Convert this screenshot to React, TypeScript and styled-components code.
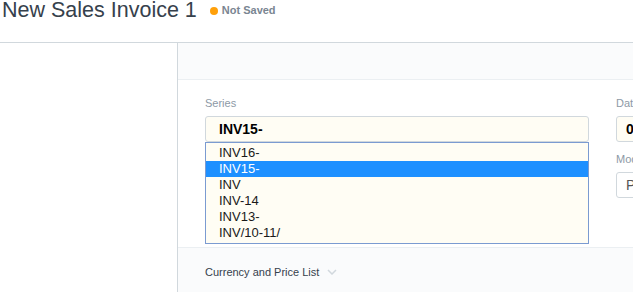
import React from "react";
import styled, { createGlobalStyle } from "styled-components";

const GlobalStyle = createGlobalStyle`
  html, body {
    margin: 0;
    padding: 0;
    background: #fff;
    overflow: hidden;
  }
  body {
    font-family: "Liberation Sans", Arial, sans-serif;
    color: #36414c;
  }
`;

const Page = styled.div`
  width: 633px;
  height: 292px;
  overflow: hidden;
`;

const Header = styled.div`
  display: flex;
  align-items: flex-start;
  height: 42px;
  border-bottom: 1px solid #d1d8dd;
  padding-left: 2px;
`;

const Title = styled.h1`
  margin: 0;
  font-size: 21.5px;
  font-weight: normal;
  line-height: 1;
  color: #36414c;
  white-space: nowrap;
`;

const Indicator = styled.span`
  display: flex;
  align-items: center;
  margin: 4px 0 0 13px;
  font-size: 11px;
  font-weight: bold;
  line-height: 13px;
  color: #7a8591;
  white-space: nowrap;
`;

const Dot = styled.span<{ $color: string }>`
  width: 8px;
  height: 8px;
  border-radius: 50%;
  background: ${(p) => p.$color};
  margin-right: 4px;
  margin-top: 1px;
`;

const Body = styled.div`
  display: flex;
  height: 249px;
`;

const Sidebar = styled.div`
  flex: 0 0 177px;
  background: #fff;
`;

const Main = styled.div`
  flex: 0 0 auto;
  width: 900px;
  border-left: 1px solid #d1d8dd;
  display: flex;
  flex-direction: column;
`;

const Toolbar = styled.div`
  height: 36px;
  background: #fafbfc;
  border-bottom: 1px solid #ebeff2;
`;

const FormSection = styled.div`
  display: grid;
  grid-template-columns: 384px 384px;
  column-gap: 27px;
  padding: 15px 0 40px 27px;
  background: #fff;
`;

const Column = styled.div`
  display: flex;
  flex-direction: column;
`;

const Field = styled.div`
  position: relative;
  margin-bottom: 9px;
`;

const Label = styled.div`
  font-size: 11px;
  line-height: 16px;
  margin-bottom: 5px;
  color: #8d99a6;
  white-space: nowrap;
`;

const Control = styled.div<{ $bg?: string; $bold?: boolean; $pad?: number }>`
  box-sizing: border-box;
  height: 26px;
  display: flex;
  align-items: center;
  padding-left: ${(p) => p.$pad ?? 9}px;
  border: 1px solid #d1d8dd;
  border-radius: 3px;
  background: ${(p) => p.$bg ?? "#fff"};
  font-size: 14px;
  font-weight: ${(p) => (p.$bold ? "bold" : "normal")};
  color: ${(p) => (p.$bold ? "#000" : "#555")};
  white-space: nowrap;
  overflow: hidden;
`;

const Listbox = styled.ul`
  position: absolute;
  top: 100%;
  left: 0;
  right: 0;
  z-index: 2;
  box-sizing: border-box;
  margin: 0;
  padding: 2px 0;
  list-style: none;
  border: 1px solid #7b9bd1;
  background: #fffdf4;
`;

const Option = styled.li<{ $selected?: boolean }>`
  height: 16px;
  padding-left: 13px;
  font-size: 13px;
  line-height: 16px;
  color: ${(p) => (p.$selected ? "#fff" : "#1a1a1a")};
  background: ${(p) => (p.$selected ? "#1e90ff" : "transparent")};
`;

const CollapsedSection = styled.div`
  flex: 1;
  background: #fafbfc;
  border-top: 1px solid #ebeff2;
  padding: 16px 0 0 27px;
`;

const SectionHead = styled.div`
  display: flex;
  align-items: center;
  gap: 8px;
  font-size: 11px;
  line-height: 16px;
  color: #36414c;
`;

const Chevron = () => (
  <svg width="10" height="6" viewBox="0 0 10 6">
    <polyline points="1,1 5,5 9,1" fill="none" stroke="#d1d8dd" strokeWidth="1.5" />
  </svg>
);

const series = ["INV16-", "INV15-", "INV", "INV-14", "INV13-", "INV/10-11/"];

export default function App() {
  return (
    <Page>
      <GlobalStyle />
      <Header>
        <Title>New Sales Invoice 1</Title>
        <Indicator>
          <Dot $color="#ffa00a" />
          Not Saved
        </Indicator>
      </Header>
      <Body>
        <Sidebar />
        <Main>
          <Toolbar />
          <FormSection>
            <Column>
              <Field>
                <Label>Series</Label>
                <Control $bg="#fffdf4" $bold $pad={13}>
                  INV15-
                </Control>
                <Listbox>
                  {series.map((s) => (
                    <Option key={s} $selected={s === "INV15-"}>
                      {s}
                    </Option>
                  ))}
                </Listbox>
              </Field>
            </Column>
            <Column>
              <Field>
                <Label>Date</Label>
                <Control $bg="#fffdf4" $bold>
                  09-05-2015
                </Control>
              </Field>
              <Field>
                <Label>Mode of Payment</Label>
                <Control>Pending</Control>
              </Field>
            </Column>
          </FormSection>
          <CollapsedSection>
            <SectionHead>
              Currency and Price List
              <Chevron />
            </SectionHead>
          </CollapsedSection>
        </Main>
      </Body>
    </Page>
  );
}
